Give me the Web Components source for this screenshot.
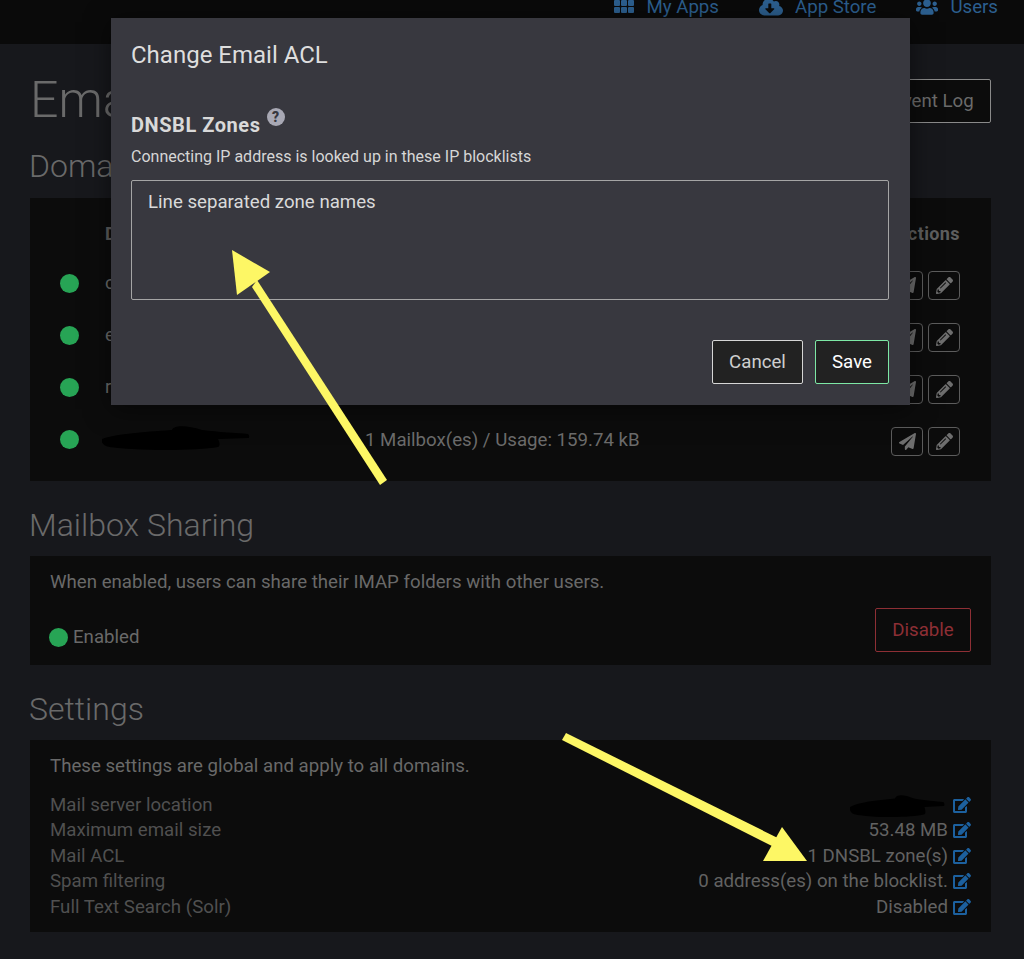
<!DOCTYPE html>
<html>
<head>
<meta charset="utf-8">
<title>Email</title>
<style>
    html, body {
        margin: 0;
        height: 959px;
        overflow: hidden;
        background-color: #17181c;
        font-family: Roboto, "Liberation Sans", sans-serif;
    }
</style>
</head>
<body>
<mail-page></mail-page>

<script>
const ICONS = {
    cloud: ['0 0 640 512', 'M537.6 226.6c4.1-10.7 6.4-22.4 6.4-34.6 0-53-43-96-96-96-19.7 0-38.1 6-53.3 16.2C367 64.2 315.3 32 256 32c-88.4 0-160 71.6-160 160 0 2.7.1 5.4.2 8.1C40.2 219.8 0 273.2 0 336c0 79.5 64.5 144 144 144h368c70.7 0 128-57.3 128-128 0-61.9-44-113.6-102.4-125.4zm-132.9 88.7L299.3 420.7c-6.2 6.2-16.4 6.2-22.6 0L171.3 315.3c-10.1-10.1-2.9-27.3 11.3-27.3H248V176c0-8.8 7.2-16 16-16h48c8.8 0 16 7.2 16 16v112h65.4c14.2 0 21.4 17.2 11.3 27.3z'],
    users: ['0 0 640 512', 'M96 224c35.3 0 64-28.7 64-64s-28.7-64-64-64-64 28.7-64 64 28.7 64 64 64zm448 0c35.3 0 64-28.7 64-64s-28.7-64-64-64-64 28.7-64 64 28.7 64 64 64zm32 32h-64c-17.6 0-33.5 7.1-45.1 18.6 40.3 22.1 68.9 62 75.1 109.4h66c17.7 0 32-14.3 32-32v-32c0-35.3-28.7-64-64-64zm-256 0c61.9 0 112-50.1 112-112S381.9 32 320 32 208 82.1 208 144s50.1 112 112 112zm76.8 32h-8.3c-20.8 10-43.9 16-68.5 16s-47.6-6-68.5-16h-8.3C179.6 288 128 339.6 128 403.2V432c0 26.5 21.5 48 48 48h288c26.5 0 48-21.5 48-48v-28.8c0-63.6-51.6-115.2-115.2-115.2zm-223.7-13.4C161.5 263.1 145.6 256 128 256H64c-35.3 0-64 28.7-64 64v32c0 17.7 14.3 32 32 32h65.9c6.3-47.4 34.9-87.3 75.2-109.4z'],
    plane: ['0 0 512 512', 'M476 3.2L12.5 270.6c-18.1 10.4-15.8 35.6 2.2 43.2L121 358.4l287.3-253.2c5.5-4.9 13.3 2.6 8.6 8.3L176 407v80.5c0 23.6 28.5 32.9 42.5 15.8L282 426l124.6 52.2c14.2 6 30.4-2.9 33-18.2l72-432C515 7.8 493.3-6.8 476 3.2z'],
    pencil: ['0 0 512 512', 'M497.9 142.1l-46.1 46.1c-4.7 4.7-12.3 4.7-17 0l-111-111c-4.7-4.7-4.7-12.3 0-17l46.1-46.1c18.7-18.7 49.1-18.7 67.9 0l60.1 60.1c18.8 18.7 18.8 49.1 0 67.9zM284.2 99.8L21.6 362.4.4 483.9c-2.9 16.4 11.4 30.6 27.8 27.8l121.5-21.3 262.6-262.6c4.7-4.7 4.7-12.3 0-17l-111-111c-4.8-4.7-12.4-4.7-17.1 0zM124.1 339.9c-5.5-5.5-5.5-14.3 0-19.8l154-154c5.5-5.5 14.3-5.5 19.8 0s5.5 14.3 0 19.8l-154 154c-5.5 5.5-14.3 5.5-19.8 0zM88 424h48v36.3l-64.5 11.3-31.1-31.1L51.7 376H88v48z'],
    edit: ['0 0 576 512', 'M402.6 83.2l90.2 90.2c3.8 3.8 3.8 10 0 13.8L274.4 405.6l-92.8 10.3c-12.4 1.4-22.9-9.1-21.5-21.5l10.3-92.8L388.8 83.2c3.8-3.8 10-3.8 13.8 0zm162-22.9l-48.8-48.8c-15.2-15.2-39.9-15.2-55.2 0l-35.4 35.4c-3.8 3.8-3.8 10 0 13.8l90.2 90.2c3.8 3.8 10 3.8 13.8 0l35.4-35.4c15.2-15.3 15.2-40 0-55.2zM384 346.2V448H64V128h229.8c3.2 0 6.2-1.3 8.5-3.5l40-40c7.6-7.6 2.2-20.5-8.5-20.5H48C21.5 64 0 85.5 0 112v352c0 26.5 21.5 48 48 48h352c26.5 0 48-21.5 48-48V306.2c0-10.7-12.9-16-20.5-8.5l-40 40c-2.2 2.3-3.5 5.3-3.5 8.5z']
};

function icon(name, width, height) {
    const [box, d] = ICONS[name];
    return `<svg viewBox="${box}" width="${width}" height="${height}" fill="currentColor" aria-hidden="true"><path d="${d}"/></svg>`;
}

class NavBar extends HTMLElement {
    constructor() {
        super();
        this.attachShadow({ mode: 'open' });
    }

    connectedCallback() {
        const grid = [0, 1, 2].map(r => [0, 1, 2].map(c =>
            `<rect x="${c * 7}" y="${r * 7}" width="6" height="6" rx="1"/>`).join('')).join('');
        this.shadowRoot.innerHTML = `
            <style>
                :host {
                    display: flex;
                    justify-content: flex-end;
                    align-items: flex-end;
                    height: 44px;
                    box-sizing: border-box;
                    padding: 0 26px 25px 0;
                    gap: 40px;
                    background-color: #0a0a0a;
                    overflow: hidden;
                    color: #2c5f8f;
                    font-size: 18.67px;
                    line-height: 24px;
                }
                .item {
                    display: flex;
                    align-items: center;
                    gap: 12px;
                }
            </style>
            <div class="item"><svg width="20" height="20" viewBox="0 0 20 20" fill="currentColor" style="margin-top:-8px">${grid}</svg><span>My Apps</span></div>
            <div class="item">${icon('cloud', 24, 20)}<span>App Store</span></div>
            <div class="item">${icon('users', 22, 20)}<span>Users</span></div>
        `;
    }
}

class OutlineButton extends HTMLElement {
    constructor() {
        super();
        this.attachShadow({ mode: 'open' });
        this.shadowRoot.innerHTML = `
            <style>
                :host {
                    display: inline-flex;
                    align-items: center;
                    justify-content: center;
                    box-sizing: border-box;
                    height: 44px;
                    padding: 0 16px;
                    border: 1px solid var(--line, #8a8a8a);
                    border-radius: 2px;
                    background-color: var(--fill, #0c0c0c);
                    color: var(--ink, #6a6a6a);
                    font-size: 18.67px;
                    white-space: nowrap;
                }
            </style>
            <slot></slot>
        `;
    }
}

class IconButton extends HTMLElement {
    constructor() {
        super();
        this.attachShadow({ mode: 'open' });
    }

    connectedCallback() {
        this.shadowRoot.innerHTML = `
            <style>
                :host {
                    display: inline-flex;
                    align-items: center;
                    justify-content: center;
                    box-sizing: border-box;
                    width: 32px;
                    height: 29px;
                    border: 1px solid #5c5c5c;
                    border-radius: 4px;
                    color: #6e6e6e;
                }
            </style>
            ${icon(this.getAttribute('icon'), 17, 17)}
        `;
    }
}

class StatusDot extends HTMLElement {
    constructor() {
        super();
        this.attachShadow({ mode: 'open' });
        this.shadowRoot.innerHTML = `
            <style>
                :host {
                    display: inline-block;
                    flex: none;
                    width: 19px;
                    height: 19px;
                    border-radius: 50%;
                    background-color: #27a455;
                }
            </style>
        `;
    }
}

class InkBlot extends HTMLElement {
    constructor() {
        super();
        this.attachShadow({ mode: 'open' });
        this.shadowRoot.innerHTML = `
            <style>
                :host { display: inline-block; line-height: 0; margin-top: 3px; }
            </style>
            <svg width="148" height="26" viewBox="0 0 148 26" preserveAspectRatio="none" style="width:var(--w,148px);height:var(--h,26px)">
                <path fill="#000" d="M0 14C14 9 40 7 70 5 72 0 84 0 100 5 116 7 134 8 146 9 148 11 147 13 146 13L116 14C118 18 118 21 116 22 100 25 60 26 30 24 14 23 6 22 4 21 0 19-1 16 0 14Z"/>
            </svg>
        `;
    }
}

class DomainTable extends HTMLElement {
    constructor() {
        super();
        this.attachShadow({ mode: 'open' });
        this.shadowRoot.innerHTML = `
            <style>
                :host {
                    display: block;
                    box-sizing: border-box;
                    height: 283px;
                    padding: 25px 31px 0 30px;
                    background-color: #0c0c0c;
                    color: #6b6b6b;
                    font-size: 18.67px;
                }
                .head {
                    display: flex;
                    justify-content: space-between;
                    height: 34px;
                    padding-left: 45px;
                    font-weight: 700;
                    font-size: 18px;
                    line-height: 22px;
                    color: #5e5e5e;
                    letter-spacing: 0.4px;
                }
            </style>
            <div class="head"><span>Domain</span><span>Actions</span></div>
            <slot></slot>
        `;
    }
}

class DomainRow extends HTMLElement {
    constructor() {
        super();
        this.attachShadow({ mode: 'open' });
        this.shadowRoot.innerHTML = `
            <style>
                :host {
                    display: grid;
                    grid-template-columns: 19px 26px 260px 1fr auto;
                    align-items: center;
                    height: 52px;
                    box-sizing: border-box;
                }
                .actions {
                    display: flex;
                    gap: 5px;
                    margin-top: 4px;
                }
                .usage { margin-top: 1px; }
                ::slotted(ink-blot) {
                    margin-left: -3px;
                }
            </style>
            <status-dot></status-dot>
            <span></span>
            <span><slot name="name"></slot></span>
            <span class="usage"><slot name="usage"></slot></span>
            <div class="actions">
                <icon-button icon="plane"></icon-button>
                <icon-button icon="pencil"></icon-button>
            </div>
        `;
    }
}

class SharingCard extends HTMLElement {
    constructor() {
        super();
        this.attachShadow({ mode: 'open' });
        this.shadowRoot.innerHTML = `
            <style>
                :host {
                    display: block;
                    box-sizing: border-box;
                    height: 109px;
                    padding: 15px 20px 0 19px;
                    background-color: #0c0c0c;
                    color: #696969;
                    font-size: 18.67px;
                    line-height: 22px;
                }
                p { margin: 0; padding-left: 1px; }
                .row {
                    display: flex;
                    justify-content: space-between;
                    align-items: flex-start;
                    margin-top: 15px;
                }
                .state {
                    display: flex;
                    align-items: center;
                    gap: 5px;
                    margin-top: 18px;
                }
                outline-button {
                    width: 96px;
                    --line: #8e2f35;
                    --ink: #8e2f35;
                }
            </style>
            <p>When enabled, users can share their IMAP folders with other users.</p>
            <div class="row">
                <div class="state"><status-dot></status-dot><span>Enabled</span></div>
                <outline-button>Disable</outline-button>
            </div>
        `;
    }
}

class SettingsCard extends HTMLElement {
    constructor() {
        super();
        this.attachShadow({ mode: 'open' });
        this.shadowRoot.innerHTML = `
            <style>
                :host {
                    display: block;
                    box-sizing: border-box;
                    height: 192px;
                    padding: 15px 20px 0 20px;
                    background-color: #0c0c0c;
                    color: #696969;
                    font-size: 18.67px;
                    line-height: 22px;
                }
                p { margin: 0 0 15px; }
            </style>
            <p>These settings are global and apply to all domains.</p>
            <slot></slot>
        `;
    }
}

class SettingRow extends HTMLElement {
    constructor() {
        super();
        this.attachShadow({ mode: 'open' });
    }

    connectedCallback() {
        this.shadowRoot.innerHTML = `
            <style>
                :host {
                    display: flex;
                    justify-content: space-between;
                    align-items: center;
                    height: 25.5px;
                    color: #505050;
                    font-size: 18.67px;
                }
                .value {
                    display: flex;
                    align-items: center;
                    gap: 5px;
                    color: #626262;
                }
                svg { color: #1c609e; }
            </style>
            <span>${this.getAttribute('label')}</span>
            <div class="value"><slot></slot>${icon('edit', 18, 16)}</div>
        `;
    }
}

class AclDialog extends HTMLElement {
    constructor() {
        super();
        this.attachShadow({ mode: 'open' });
        this.shadowRoot.innerHTML = `
            <style>
                :host {
                    position: absolute;
                    left: 111px;
                    top: 18px;
                    width: 799px;
                    height: 387px;
                    box-sizing: border-box;
                    padding: 0 21px 0 20px;
                    background-color: #38383f;
                    color: #e4e4e4;
                    display: flex;
                    flex-direction: column;
                    box-shadow: 0 4px 24px rgba(0, 0, 0, 0.5);
                }
                h2 {
                    margin: 22px 0 0;
                    height: 30px;
                    font-size: 24px;
                    font-weight: 400;
                    line-height: 30px;
                    color: #dedede;
                }
                .label {
                    display: flex;
                    align-items: flex-start;
                    gap: 6px;
                    margin-top: 38px;
                    height: 39px;
                }
                label {
                    margin-top: 5px;
                    font-size: 20px;
                    font-weight: 700;
                    letter-spacing: 0.55px;
                    line-height: 24px;
                    color: #d9d9d9;
                }
                .help {
                    width: 18px;
                    height: 18px;
                    border-radius: 50%;
                    background-color: #a8a8b4;
                    color: #38383f;
                    font-size: 14px;
                    font-weight: 900;
                    line-height: 18px;
                    text-align: center;
                }
                .hint {
                    margin: 0 0 13px;
                    font-size: 16px;
                    line-height: 20px;
                    color: #d6d6d6;
                }
                .zones {
                    box-sizing: border-box;
                    height: 120px;
                    padding: 9px 16px;
                    border: 1px solid #a5a5a5;
                    border-radius: 2px;
                    font-size: 18.67px;
                    line-height: 24px;
                    color: #dadada;
                }
                .buttons {
                    display: flex;
                    justify-content: flex-end;
                    gap: 12px;
                    margin-top: 40px;
                }
                outline-button {
                    --fill: #222222;
                }
                .cancel {
                    width: 91px;
                    --line: #d6d6d6;
                    --ink: #cfcfcf;
                }
                .save {
                    width: 74px;
                    --line: #7de8a5;
                    --ink: #ffffff;
                }
            </style>
            <h2>Change Email ACL</h2>
            <div class="label"><label>DNSBL Zones</label><span class="help">?</span></div>
            <p class="hint">Connecting IP address is looked up in these IP blocklists</p>
            <div class="zones">Line separated zone names</div>
            <div class="buttons">
                <outline-button class="cancel">Cancel</outline-button>
                <outline-button class="save">Save</outline-button>
            </div>
        `;
    }
}

class MarkupArrows extends HTMLElement {
    constructor() {
        super();
        this.attachShadow({ mode: 'open' });
        // yellow annotation arrows drawn on top of the screenshot
        this.shadowRoot.innerHTML = `
            <style>
                :host {
                    position: absolute;
                    inset: 0;
                    pointer-events: none;
                }
                svg { display: block; }
            </style>
            <svg width="1024" height="959" viewBox="0 0 1024 959" fill="#fdf765">
                <path d="M232 250L270 272 237 295Z"/>
                <path d="M252 287L257 280 387 480 380 485Z"/>
                <path d="M782 827L807 861 763 861Z"/>
                <path d="M566 733L790 844 780 850 562 740Z"/>
            </svg>
        `;
    }
}

class MailPage extends HTMLElement {
    constructor() {
        super();
        this.attachShadow({ mode: 'open' });
        this.shadowRoot.innerHTML = `
            <style>
                :host {
                    display: block;
                    position: relative;
                    width: 1024px;
                    height: 959px;
                    overflow: hidden;
                }
                main {
                    padding: 0 33px 0 30px;
                }
                .title {
                    display: flex;
                    justify-content: space-between;
                    align-items: flex-start;
                    padding-top: 35px;
                    height: 89px;
                    box-sizing: border-box;
                }
                h1, h3 {
                    margin: 0;
                    font-weight: 300;
                    color: #6a6a6a;
                }
                h1 {
                    font-size: 50px;
                    line-height: 54px;
                    margin-top: -6px;
                }
                h3 {
                    font-size: 32px;
                    line-height: 40px;
                    height: 65px;
                    box-sizing: border-box;
                    padding-top: 13px;
                    margin-left: -1px;
                }
                .next { height: 75px; padding-top: 24px; }
                .log { width: 116px; }
                ink-blot.site { --w: 95px; --h: 24px; margin-right: 3px; }
            </style>
            <nav-bar></nav-bar>
            <main>
                <div class="title">
                    <h1>Email</h1>
                    <outline-button class="log">Event Log</outline-button>
                </div>
                <h3>Domains</h3>
                <domain-table>
                    <domain-row><span slot="name">c</span></domain-row>
                    <domain-row><span slot="name">e</span></domain-row>
                    <domain-row><span slot="name">r</span></domain-row>
                    <domain-row><ink-blot slot="name"></ink-blot><span slot="usage">1 Mailbox(es) / Usage: 159.74 kB</span></domain-row>
                </domain-table>
                <h3 class="next">Mailbox Sharing</h3>
                <sharing-card></sharing-card>
                <h3 class="next">Settings</h3>
                <settings-card>
                    <setting-row label="Mail server location"><ink-blot class="site"></ink-blot></setting-row>
                    <setting-row label="Maximum email size">53.48 MB</setting-row>
                    <setting-row label="Mail ACL">1 DNSBL zone(s)</setting-row>
                    <setting-row label="Spam filtering">0 address(es) on the blocklist.</setting-row>
                    <setting-row label="Full Text Search (Solr)">Disabled</setting-row>
                </settings-card>
            </main>
            <acl-dialog></acl-dialog>
            <markup-arrows></markup-arrows>
        `;
    }
}

customElements.define('nav-bar', NavBar);
customElements.define('outline-button', OutlineButton);
customElements.define('icon-button', IconButton);
customElements.define('status-dot', StatusDot);
customElements.define('ink-blot', InkBlot);
customElements.define('domain-table', DomainTable);
customElements.define('domain-row', DomainRow);
customElements.define('sharing-card', SharingCard);
customElements.define('settings-card', SettingsCard);
customElements.define('setting-row', SettingRow);
customElements.define('acl-dialog', AclDialog);
customElements.define('markup-arrows', MarkupArrows);
customElements.define('mail-page', MailPage);
</script>
</body>
</html>
